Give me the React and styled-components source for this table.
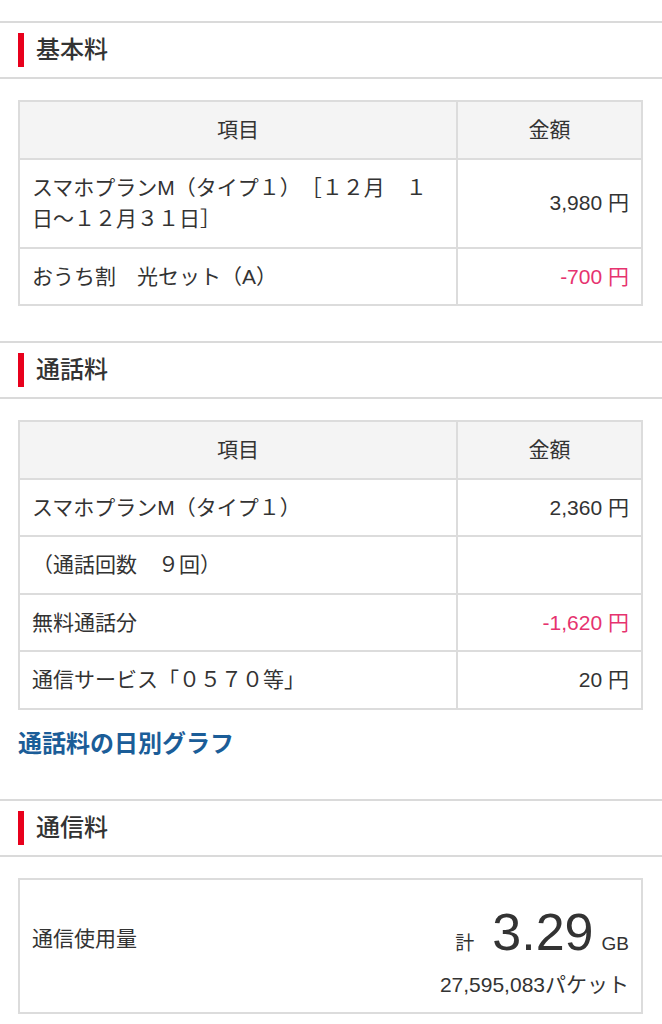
import React from 'react'
import styled, { createGlobalStyle } from 'styled-components'

const GlobalStyle = createGlobalStyle`
  body {
    margin: 0;
    background: #fff;
    font-family: 'Liberation Sans', 'Noto Sans CJK JP', sans-serif;
    color: #333;
    text-spacing-trim: space-all;
  }
`

const Page = styled.div`
  width: 662px;
  padding-top: 21px;
`

const SectionHeader = styled.div`
  display: flex;
  align-items: center;
  gap: 12px;
  height: 54px;
  padding-left: 18px;
  border-top: 2px solid #dadada;
  border-bottom: 2px solid #dadada;
  margin-top: ${(p) => p.$gap || 0}px;
`

const RedBar = styled.span`
  width: 6px;
  height: 34px;
  background: #e8001c;
`

const SectionTitle = styled.h2`
  margin: 0;
  font-size: 24px;
  font-weight: 500;
  color: #333;
  line-height: 1;
`

const Content = styled.div`
  padding: 21px 19px 0 18px;
`

const Table = styled.table`
  width: 625px;
  border-collapse: collapse;
  table-layout: fixed;
  font-size: 21px;
  line-height: 31.5px;
`

const HeadCell = styled.th`
  background: #f4f4f4;
  border: 2px solid #dcdcdc;
  font-weight: 400;
  padding: 12px 12px;
  text-align: center;
  color: #333;
`

const Cell = styled.td`
  border: 2px solid #dcdcdc;
  padding: 12px 12px;
  text-align: ${(p) => (p.$right ? 'right' : 'left')};
  color: ${(p) => (p.$minus ? '#e6336f' : '#333')};
  vertical-align: middle;
`

const Link = styled.a`
  display: block;
  margin-top: 22px;
  font-size: 24px;
  line-height: 24px;
  font-weight: 700;
  color: #1b5d98;
  text-decoration: none;
`

const UsageBox = styled.div`
  border: 2px solid #dcdcdc;
  padding: 22px 12px 14px 12px;
`

const UsageRow = styled.div`
  display: flex;
  justify-content: space-between;
  align-items: center;
`

const Label = styled.span`
  font-size: 21px;
  padding-top: 10px;
`

const Total = styled.div`
  display: flex;
  align-items: baseline;
  font-size: 19px;
`

const Big = styled.span`
  font-size: 52px;
  margin: 0 8px 0 18px;
  line-height: 60px;
`

const Packets = styled.div`
  text-align: right;
  font-size: 21px;
  margin-top: 6px;
`

const ChargeTable = ({ rows }) => (
  <Table>
    <colgroup>
      <col style={{ width: 438 }} />
      <col />
    </colgroup>
    <thead>
      <tr>
        <HeadCell>項目</HeadCell>
        <HeadCell>金額</HeadCell>
      </tr>
    </thead>
    <tbody>
      {rows.map((r, i) => (
        <tr key={i}>
          <Cell>{r.name}</Cell>
          <Cell $right $minus={r.minus}>
            {r.amount}
          </Cell>
        </tr>
      ))}
    </tbody>
  </Table>
)

const Section = ({ title, gap }) => (
  <SectionHeader $gap={gap}>
    <RedBar />
    <SectionTitle>{title}</SectionTitle>
  </SectionHeader>
)

const basic = [
  { name: 'スマホプランM（タイプ１）［１２月　１日～１２月３１日］', amount: '3,980 円' },
  { name: 'おうち割　光セット（A）', amount: '-700 円', minus: true },
]

const calls = [
  { name: 'スマホプランM（タイプ１）', amount: '2,360 円' },
  { name: '（通話回数　９回）', amount: '' },
  { name: '無料通話分', amount: '-1,620 円', minus: true },
  { name: '通信サービス「０５７０等」', amount: '20 円' },
]

export default function App() {
  return (
    <Page>
      <GlobalStyle />
      <Section title="基本料" />
      <Content>
        <ChargeTable rows={basic} />
      </Content>
      <Section title="通話料" gap={35} />
      <Content>
        <ChargeTable rows={calls} />
        <Link href="#">通話料の日別グラフ</Link>
      </Content>
      <Section title="通信料" gap={43} />
      <Content>
        <UsageBox>
          <UsageRow>
            <Label>通信使用量</Label>
            <Total>
              計<Big>3.29</Big>GB
            </Total>
          </UsageRow>
          <Packets>27,595,083パケット</Packets>
        </UsageBox>
      </Content>
    </Page>
  )
}
